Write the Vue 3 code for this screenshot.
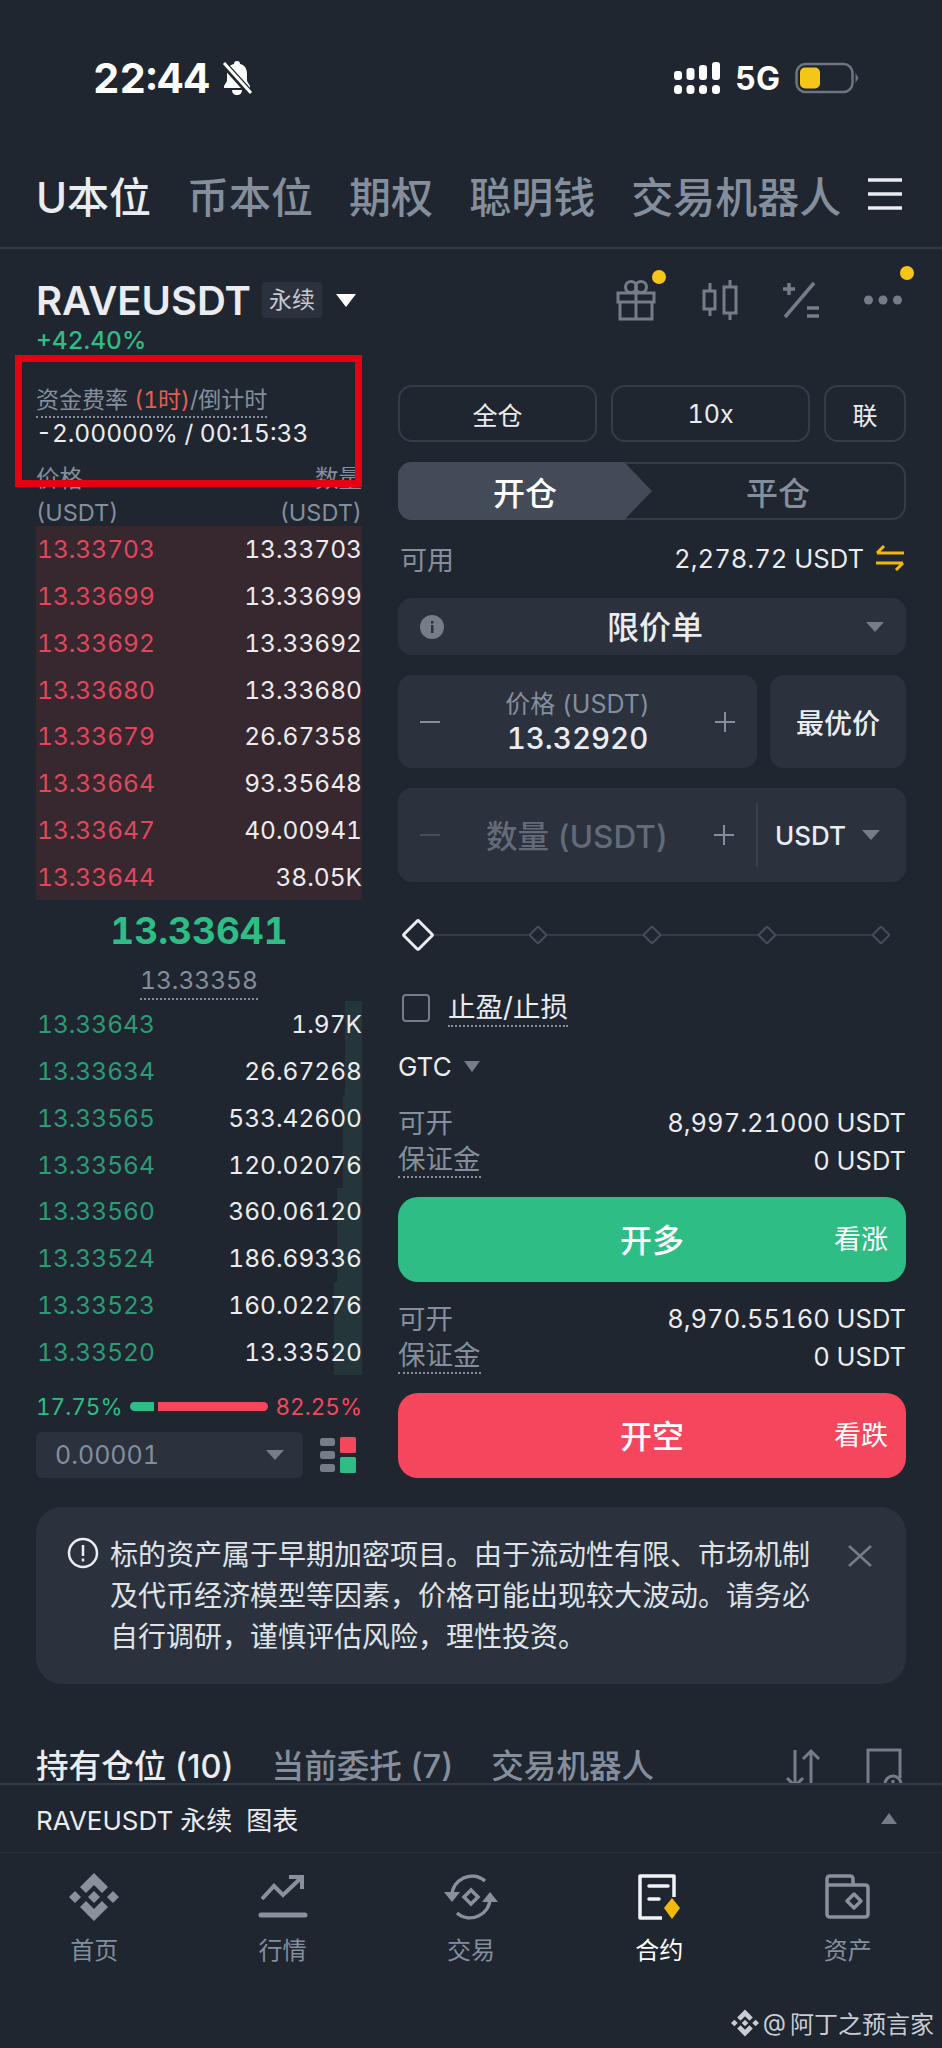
<script setup>
const tabs = ['U本位', '币本位', '期权', '聪明钱', '交易机器人']

const asks = [
  ['13.33703', '13.33703'],
  ['13.33699', '13.33699'],
  ['13.33692', '13.33692'],
  ['13.33680', '13.33680'],
  ['13.33679', '26.67358'],
  ['13.33664', '93.35648'],
  ['13.33647', '40.00941'],
  ['13.33644', '38.05K']
]

const bids = [
  ['13.33643', '1.97K', 17],
  ['13.33634', '26.67268', 17],
  ['13.33565', '533.42600', 19],
  ['13.33564', '120.02076', 19],
  ['13.33560', '360.06120', 25],
  ['13.33524', '186.69336', 25],
  ['13.33523', '160.02276', 28],
  ['13.33520', '13.33520', 28]
]

const navItems = [
  { label: '首页', icon: 'home' },
  { label: '行情', icon: 'market' },
  { label: '交易', icon: 'trade' },
  { label: '合约', icon: 'futures', active: true },
  { label: '资产', icon: 'wallet' }
]
</script>

<template>
  <div class="page">
    <div class="status">
      <div class="status-left">
        <span class="time">22:44</span>
        <svg class="bell" width="36" height="36" viewBox="0 0 34 36">
          <path d="M17 1c2 0 3 1 3 3 5 1 7 5 7 10v7l3 5v2H4v-2l3-5v-7c0-5 2-9 7-10 0-2 1-3 3-3z" fill="#fff" />
          <path d="M12 30h10c0 3-2 5-5 5s-5-2-5-5z" fill="#fff" />
          <path d="M3 3l28 31" stroke="#1f2630" stroke-width="7" />
          <path d="M4 3l27 30" stroke="#fff" stroke-width="3" />
        </svg>
      </div>
      <div class="status-right">
        <svg width="46" height="32" viewBox="0 0 46 32" fill="#fff">
          <rect x="0" y="9" width="8" height="9" rx="3" />
          <rect x="0" y="23" width="8" height="9" rx="3.5" />
          <rect x="12.500" y="6" width="8" height="12" rx="3" />
          <rect x="12.500" y="23" width="8" height="9" rx="3.5" />
          <rect x="25" y="3" width="8" height="15" rx="3" />
          <rect x="25" y="23" width="8" height="9" rx="3.5" />
          <rect x="38" y="0" width="8" height="18" rx="3" />
          <rect x="38" y="23" width="8" height="9" rx="3.5" />
        </svg>
        <span class="net">5G</span>
        <svg width="64" height="32" viewBox="0 0 64 32">
          <rect x="1.500" y="2" width="56" height="28" rx="9" fill="none" stroke="#6e7580" stroke-width="2.500" />
          <rect x="5" y="5.500" width="20" height="21" rx="5" fill="#f5c518" />
          <path d="M60.500 11l3 5-3 5z" fill="#6e7580" />
        </svg>
      </div>
    </div>

    <div class="tabs">
      <span v-for="(t, i) in tabs" :key="t" class="tab" :class="{ on: i === 0 }">{{ t }}</span>
      <svg class="burger" width="34" height="32" viewBox="0 0 34 32">
        <path d="M0 2h34M0 16h34M0 30h34" stroke="#eaecef" stroke-width="3.500" />
      </svg>
    </div>

    <div class="symbol">
      <div class="symbol-left">
        <span class="pair">RAVEUSDT</span>
        <span class="badge">永续</span>
        <i class="caret white"></i>
      </div>
      <div class="symbol-icons">
        <span class="tool">
          <svg width="42" height="42" viewBox="0 0 42 42" fill="none" stroke="#767d89" stroke-width="3">
            <path d="M3 14h36v9H3zM5 23h32v17H5zM21 14v26" />
            <circle cx="16" cy="8" r="5.500" />
            <circle cx="26" cy="8" r="5.500" />
          </svg>
          <i class="dot d1"></i>
        </span>
        <span class="tool">
          <svg width="36" height="40" viewBox="0 0 36 40" fill="none" stroke="#767d89" stroke-width="3">
            <path d="M2 11h11v18H2zM8 3v8M8 29v7M22 7h12v26H22zM28 0v7M28 33v7" />
          </svg>
        </span>
        <span class="tool">
          <svg width="36" height="38" viewBox="0 0 36 38" fill="none" stroke="#767d89" stroke-width="3.500">
            <path d="M31 2L2 36M0 8h12M6 2v12M24 27h12M24 35h12" />
          </svg>
        </span>
        <span class="tool">
          <svg width="38" height="10" viewBox="0 0 38 10" fill="#767d89">
            <circle cx="4.500" cy="5" r="4.500" />
            <circle cx="19" cy="5" r="4.500" />
            <circle cx="33.500" cy="5" r="4.500" />
          </svg>
          <i class="dot d2"></i>
        </span>
      </div>
    </div>
    <div class="change">+42.40%</div>

    <div class="main">
      <div class="red-box"></div>

      <div class="left">
        <div class="funding"><span class="dotted">资金费率 <em>(1时)</em>/倒计时</span></div>
        <div class="funding-val">-2.00000% / 00:15:33</div>
        <div class="book-head"><span>价格</span><span>数量</span></div>
        <div class="book-head second"><span>(USDT)</span><span>(USDT)</span></div>

        <div class="asks">
          <div v-for="a in asks" :key="a[0]" class="row">
            <span class="red">{{ a[0] }}</span><span class="qty">{{ a[1] }}</span>
          </div>
        </div>

        <div class="mid">13.33641</div>
        <div class="index"><span>13.33358</span></div>

        <div class="bids">
          <div v-for="b in bids" :key="b[0]" class="row">
            <i class="depth" :style="{ width: b[2] + 'px' }"></i>
            <span class="green">{{ b[0] }}</span><span class="qty">{{ b[1] }}</span>
          </div>
        </div>

        <div class="ratio">
          <span class="green">17.75%</span>
          <div class="ratio-bar"><i class="g"></i><i class="r"></i></div>
          <span class="red">82.25%</span>
        </div>

        <div class="depth-row">
          <div class="select">
            <span>0.00001</span>
            <i class="caret gray"></i>
          </div>
          <svg width="37" height="36" viewBox="0 0 37 36">
            <rect x="0" y="1" width="15" height="8" rx="2.500" fill="#767d89" />
            <rect x="0" y="14" width="15" height="8" rx="2.500" fill="#767d89" />
            <rect x="0" y="27" width="15" height="8" rx="2.500" fill="#767d89" />
            <rect x="20" y="0" width="16" height="16" rx="1.500" fill="#f6465d" />
            <rect x="20" y="20" width="16" height="16" rx="1.500" fill="#2ebd85" />
          </svg>
        </div>
      </div>

      <div class="right">
        <div class="margin-row">
          <button class="mbtn wide">全仓</button>
          <button class="mbtn wide">10x</button>
          <button class="mbtn">联</button>
        </div>

        <div class="side">
          <div class="side-on">开仓</div>
          <div class="side-off">平仓</div>
        </div>

        <div class="avail">
          <span class="muted">可用</span>
          <span class="avail-val">2,278.72 USDT
            <svg width="30" height="26" viewBox="0 0 30 26" fill="none" stroke="#f0b90b" stroke-width="3">
              <path d="M29 8H2M9 1L2 8M1 18h27M21 25l7-7" />
            </svg>
          </span>
        </div>

        <div class="field order-type">
          <svg width="24" height="24" viewBox="0 0 24 24">
            <circle cx="12" cy="12" r="12" fill="#767d89" />
            <rect x="11" y="10" width="2.500" height="8" fill="#2b323e" />
            <rect x="11" y="6" width="2.500" height="2.500" fill="#2b323e" />
          </svg>
          <span>限价单</span>
          <i class="caret gray"></i>
        </div>

        <div class="price-row">
          <div class="field stepper">
            <i class="minus"></i>
            <div class="price">
              <small>价格 (USDT)</small>
              <b>13.32920</b>
            </div>
            <i class="plus"></i>
          </div>
          <div class="field best">最优价</div>
        </div>

        <div class="field qty-field">
          <div class="qty-left">
            <i class="minus dim"></i>
            <span>数量 (USDT)</span>
            <i class="plus"></i>
          </div>
          <div class="unit">
            <span>USDT</span>
            <i class="caret gray"></i>
          </div>
        </div>

        <div class="slider">
          <i class="knob big"></i>
          <i class="knob"></i>
          <i class="knob"></i>
          <i class="knob"></i>
          <i class="knob"></i>
        </div>

        <div class="tpsl">
          <i class="check"></i>
          <span>止盈/止损</span>
        </div>

        <div class="gtc">
          <span>GTC</span>
          <i class="caret gray"></i>
        </div>

        <div class="info">
          <div><span class="muted">可开</span><span>8,997.21000 USDT</span></div>
          <div><span class="muted dotted">保证金</span><span>0 USDT</span></div>
        </div>
        <button class="action long"><span>开多</span><small>看涨</small></button>

        <div class="info">
          <div><span class="muted">可开</span><span>8,970.55160 USDT</span></div>
          <div><span class="muted dotted">保证金</span><span>0 USDT</span></div>
        </div>
        <button class="action short"><span>开空</span><small>看跌</small></button>
      </div>
    </div>

    <div class="notice">
      <svg width="32" height="32" viewBox="0 0 32 32" fill="none" stroke="#eaecef" stroke-width="2.500">
        <circle cx="16" cy="16" r="14" />
        <path d="M16 8v11M16 21.500v3" />
      </svg>
      <p>标的资产属于早期加密项目。由于流动性有限、市场机制及代币经济模型等因素，价格可能出现较大波动。请务必自行调研，谨慎评估风险，理性投资。</p>
      <svg class="close" width="24" height="22" viewBox="0 0 24 22" stroke="#767d89" stroke-width="2.500">
        <path d="M1 1l22 20M23 1L1 21" />
      </svg>
    </div>

    <div class="orders">
      <span class="otab on">持有仓位 (10)</span>
      <span class="otab">当前委托 (7)</span>
      <span class="otab">交易机器人</span>
      <div class="orders-icons">
        <svg width="36" height="44" viewBox="0 0 36 44" fill="none" stroke="#767d89" stroke-width="3">
          <path d="M10 2v36M2 30l8 8 8-8M26 44V3M18 11l8-8 8 8" />
        </svg>
        <svg width="37" height="44" viewBox="0 0 37 44" fill="none" stroke="#767d89" stroke-width="3">
          <path d="M2 44V2h32v28" />
          <circle cx="27" cy="36" r="8" />
          <path d="M27 32v5l2 2" />
        </svg>
      </div>
    </div>

    <div class="chart-bar">
      <span>RAVEUSDT 永续&nbsp;&nbsp;图表</span>
      <i class="caret up"></i>
    </div>

    <div class="nav">
      <div v-for="n in navItems" :key="n.label" class="nav-item" :class="{ on: n.active }">
        <svg width="50" height="50" viewBox="0 0 50 50">
          <g v-if="n.icon === 'home'" fill="#8a919d">
            <path d="M25 1l14 14-6 6-8-8-8 8-6-6z" />
            <path d="M25 49l14-14-6-6-8 8-8-8-6 6z" />
            <path d="M25 19l6 6-6 6-6-6z" />
            <path d="M6 19l6 6-6 6-6-6zM44 19l6 6-6 6-6-6z" />
          </g>
          <g v-else-if="n.icon === 'market'" fill="none" stroke="#8a919d" stroke-width="4">
            <path d="M4 27l12-13 9 9 19-18M31 5h13v12" />
            <path d="M3 43h44" stroke-width="5" stroke-linecap="round" />
          </g>
          <g v-else-if="n.icon === 'trade'" fill="none" stroke="#8a919d" stroke-width="3.500">
            <path d="M6 24C6 7 26 -2 39 9M44 26c0 17-20 26-33 15" />
            <path d="M-2 20l8 10 8-10zM36 30l8-10 8 10z" fill="#8a919d" stroke="none" />
            <path d="M25 18l7 7-7 7-7-7z" />
          </g>
          <g v-else-if="n.icon === 'futures'">
            <path d="M40 25V4H6v42h22" fill="none" stroke="#f2f3f5" stroke-width="3.500" stroke-linejoin="round" />
            <path d="M15 14h19M15 27h10" stroke="#f2f3f5" stroke-width="3.500" stroke-linecap="round" />
            <path d="M38 26l8 10-8 11-8-11z" fill="#f0b90b" />
          </g>
          <g v-else fill="none" stroke="#8a919d" stroke-width="3.500" stroke-linejoin="round">
            <path d="M4 13V7c0-2 1-3 3-3h20c2 0 3 1 3 3v6h12c2 0 3 1 3 3v26c0 2-1 3-3 3H7c-2 0-3-1-3-3V13h26" />
            <path d="M31 22l7 7-7 7-7-7z" />
          </g>
        </svg>
        <span>{{ n.label }}</span>
      </div>
    </div>

    <div class="watermark">
      <svg width="28" height="28" viewBox="0 0 50 50" fill="#c9ccd2">
        <path d="M25 1l14 14-6 6-8-8-8 8-6-6z" />
        <path d="M25 49l14-14-6-6-8 8-8-8-6 6z" />
        <path d="M25 19l6 6-6 6-6-6z" />
        <path d="M6 19l6 6-6 6-6-6zM44 19l6 6-6 6-6-6z" />
      </svg>
      <span>@</span>
      <span>阿丁之预言家</span>
    </div>
  </div>
</template>

<style>
html, body {
  margin: 0;
  background: #1f2630;
}
</style>

<style scoped>
.page {
  position: relative;
  width: 942px;
  height: 2048px;
  overflow: hidden;
  background: #1f2630;
  color: #eaecef;
  font-family: Inter, "Noto Sans CJK SC", sans-serif;
  font-variant-numeric: tabular-nums;
}

i {
  display: block;
  font-style: normal;
}

button {
  font-family: inherit;
  font-variant-numeric: inherit;
  padding: 0;
  cursor: pointer;
}

.status {
  height: 156px;
  box-sizing: border-box;
  padding: 0 83px 0 93px;
  display: flex;
  align-items: center;
  justify-content: space-between;
}

.status-left {
  display: flex;
  align-items: center;
  gap: 9px;
}

.time {
  font-size: 41px;
  font-weight: 700;
  color: #fff;
}

.status-right {
  display: flex;
  align-items: center;
  gap: 15px;
}

.net {
  font-size: 32px;
  font-weight: 700;
  color: #fff;
}

.tabs {
  height: 93px;
  box-sizing: border-box;
  padding: 0 41px 15px 36px;
  display: flex;
  align-items: center;
  gap: 36px;
  border-bottom: 2px solid #333a45;
}

.tab {
  font-size: 42px;
  font-weight: 500;
  color: #848e9c;
  white-space: nowrap;
}

.tab.on {
  color: #eaecef;
}

.burger {
  margin: 0 0 0 -9px;
  flex: none;
}

.symbol {
  height: 72px;
  box-sizing: border-box;
  padding: 30px 40px 0 36px;
  display: flex;
  align-items: center;
  justify-content: space-between;
}

.symbol-left {
  display: flex;
  align-items: center;
}

.pair {
  font-size: 40px;
  font-weight: 600;
}

.badge {
  margin-left: 11px;
  width: 60px;
  height: 36px;
  line-height: 36px;
  text-align: center;
  font-size: 23px;
  color: #c5c9d0;
  background: #2b323e;
  border-radius: 4px;
}

.caret {
  width: 0;
  height: 0;
  border-left: 9px solid transparent;
  border-right: 9px solid transparent;
  border-top: 10px solid #767d89;
}

.caret.white {
  margin-left: 14px;
  border-top: 13px solid #fff;
  border-left-width: 10px;
  border-right-width: 10px;
}

.caret.up {
  border-left-width: 8px;
  border-right-width: 8px;
  border-top: 0;
  border-bottom: 11px solid #767d89;
}

.symbol-icons {
  display: flex;
  align-items: center;
  gap: 45px;
}

.tool {
  position: relative;
  display: flex;
}

.dot {
  position: absolute;
  width: 14px;
  height: 14px;
  border-radius: 50%;
  background: #f5c518;
}

.d1 {
  right: -9px;
  top: -9px;
}

.d2 {
  right: -12px;
  top: -29px;
}

.change {
  padding-left: 36px;
  height: 36px;
  line-height: 38px;
  font-size: 24.500px;
  font-weight: 500;
  color: #2ebd85;
}

.main {
  position: relative;
  padding: 0 36px;
  display: grid;
  grid-template-columns: 326px 508px;
  column-gap: 36px;
}

.red-box {
  position: absolute;
  left: 15px;
  top: -2px;
  width: 347px;
  height: 132px;
  box-sizing: border-box;
  border: 7px solid #e60012;
  z-index: 2;
}

.funding {
  margin-top: 28px;
  height: 33px;
  font-size: 23px;
  line-height: 30px;
  color: #848e9c;
  white-space: nowrap;
}

.dotted {
  border-bottom: 2px dotted #848e9c;
  padding-bottom: 2px;
}

.funding em {
  font-style: normal;
  color: #e0604f;
}

.funding-val {
  height: 30px;
  line-height: 30px;
  font-size: 24.500px;
  white-space: nowrap;
}

.book-head {
  margin-top: 16px;
  display: flex;
  justify-content: space-between;
  font-size: 23.500px;
  line-height: 30px;
  color: #848e9c;
}

.book-head.second {
  margin-top: 4px;
  height: 28px;
}

.asks {
  background: #37272f;
}

.row {
  position: relative;
  height: 46.750px;
  display: flex;
  align-items: center;
  justify-content: space-between;
  font-size: 24.500px;
  padding-left: 1px;
}

.row span {
  position: relative;
}

.depth {
  position: absolute;
  right: 0;
  top: 0;
  bottom: 0;
  background: #24363a;
}

.red {
  color: #f6465d;
}

.green {
  color: #2ebd85;
}

.bids .green {
  color: #2a9c76;
}

.asks .red {
  color: #e0465c;
}

.qty {
  color: #eaecef;
}

.mid {
  height: 62px;
  line-height: 62px;
  text-align: center;
  font-size: 37px;
  font-weight: 700;
  color: #2ebd85;
}

.index {
  height: 39px;
  line-height: 36px;
  text-align: center;
  font-size: 24.500px;
  color: #848e9c;
}

.index span {
  border-bottom: 2px dotted #848e9c;
  padding-bottom: 3px;
}

.ratio {
  margin-top: 15px;
  height: 32px;
  display: flex;
  align-items: center;
  justify-content: space-between;
  font-size: 22.500px;
}

.ratio-bar {
  width: 138px;
  display: flex;
  gap: 4px;
}

.ratio-bar i {
  height: 9px;
}

.ratio-bar .g {
  width: 24px;
  background: #2ebd85;
  border-radius: 5px 0 0 5px;
}

.ratio-bar .r {
  flex: 1;
  background: #f6465d;
  border-radius: 0 5px 5px 0;
}

.depth-row {
  margin-top: 10px;
  display: flex;
  align-items: center;
  justify-content: space-between;
  padding-right: 5px;
}

.select {
  width: 267px;
  height: 46px;
  box-sizing: border-box;
  padding: 0 19px;
  display: flex;
  align-items: center;
  justify-content: space-between;
  background: #2b323e;
  border-radius: 6px;
  font-size: 25px;
  color: #848e9c;
}

.margin-row {
  margin-top: 28px;
  display: flex;
  gap: 14px;
}

.mbtn {
  height: 57px;
  width: 82px;
  background: none;
  border: 2px solid #353c48;
  border-radius: 14px;
  color: #eaecef;
  font-size: 25px;
}

.mbtn.wide {
  width: 199px;
}

.side {
  margin-top: 20px;
  height: 58px;
  box-sizing: border-box;
  display: flex;
  border: 2px solid #353c48;
  border-radius: 14px;
  position: relative;
  font-size: 32px;
  font-weight: 500;
}

.side-on {
  width: 254px;
  margin: -2px 0 -2px -2px;
  background: #434b59;
  border-radius: 14px 0 0 14px;
  clip-path: polygon(0 0, 89% 0, 100% 50%, 89% 100%, 0 100%);
  display: flex;
  align-items: center;
  justify-content: center;
  color: #fff;
}

.side-off {
  flex: 1;
  display: flex;
  align-items: center;
  justify-content: center;
  color: #848e9c;
}

.avail {
  margin: 14px 0 16px;
  height: 48px;
  display: flex;
  align-items: center;
  justify-content: space-between;
  font-size: 25.600px;
  padding-left: 2px;
}

.avail .muted {
  font-size: 27px;
}

.muted {
  color: #848e9c;
}

.avail-val {
  display: flex;
  align-items: center;
  gap: 11px;
  padding-right: 1px;
}

.field {
  background: #2b323e;
  border-radius: 14px;
}

.order-type {
  height: 57px;
  box-sizing: border-box;
  padding: 0 22px;
  display: flex;
  align-items: center;
  justify-content: space-between;
  font-size: 32px;
  font-weight: 500;
}

.order-type span {
  padding-bottom: 3px;
}

.price-row {
  margin-top: 20px;
  display: flex;
  gap: 13px;
}

.stepper {
  width: 359px;
  height: 93px;
  box-sizing: border-box;
  padding: 0 22px;
  display: flex;
  align-items: center;
  justify-content: space-between;
}

.minus,
.plus {
  position: relative;
  width: 20px;
  height: 20px;
}

.minus::before,
.plus::before {
  content: "";
  position: absolute;
  left: 0;
  right: 0;
  top: 9px;
  height: 2px;
  background: #848e9c;
}

.plus::after {
  content: "";
  position: absolute;
  top: 0;
  bottom: 0;
  left: 9px;
  width: 2px;
  background: #848e9c;
}

.minus.dim::before {
  background: #474e5a;
}

.price {
  display: flex;
  flex-direction: column;
  align-items: center;
}

.price small {
  font-size: 25px;
  line-height: 32px;
  color: #848e9c;
}

.price b {
  font-size: 29.500px;
  line-height: 36px;
  font-weight: 500;
}

.best {
  flex: 1;
  display: flex;
  align-items: center;
  justify-content: center;
  font-size: 28px;
  font-weight: 500;
}

.qty-field {
  margin-top: 20px;
  height: 94px;
  display: flex;
  align-items: center;
}

.qty-left {
  width: 360px;
  height: 64px;
  box-sizing: border-box;
  padding: 0 22px;
  display: flex;
  align-items: center;
  justify-content: space-between;
  border-right: 2px solid #3a414d;
}

.qty-left span {
  font-size: 31.500px;
  font-weight: 500;
  color: #636b78;
  padding-bottom: 3px;
}

.unit {
  flex: 1;
  padding: 0 26px 0 17px;
  display: flex;
  align-items: center;
  justify-content: space-between;
  font-size: 26px;
  font-weight: 500;
}

.slider {
  position: relative;
  margin-top: 38px;
  height: 30px;
  padding: 0 18px 0 8px;
  display: flex;
  align-items: center;
  justify-content: space-between;
}

.slider::before {
  content: "";
  position: absolute;
  left: 20px;
  right: 22px;
  top: 14px;
  height: 2px;
  background: #353c48;
}

.knob {
  position: relative;
  width: 14px;
  height: 14px;
  transform: rotate(45deg);
  box-sizing: border-box;
  border: 2px solid #474e5a;
  background: #1f2630;
  border-radius: 2px;
}

.knob.big {
  width: 24px;
  height: 24px;
  border: 3px solid #eaecef;
  border-radius: 3px;
}

.tpsl {
  margin-top: 38px;
  height: 40px;
  padding-left: 4px;
  display: flex;
  align-items: center;
  gap: 18px;
  font-size: 27.500px;
}

.tpsl span {
  border-bottom: 2px dotted #848e9c;
  line-height: 34px;
  padding-bottom: 1px;
}

.check {
  width: 28px;
  height: 28px;
  box-sizing: border-box;
  border: 2px solid #767d89;
  border-radius: 4px;
}

.gtc {
  margin-top: 18px;
  height: 40px;
  display: flex;
  align-items: center;
  gap: 12px;
  font-size: 26px;
}

.gtc .caret {
  border-left-width: 8px;
  border-right-width: 8px;
  border-top-width: 11px;
}

.info {
  margin-top: 18px;
  font-size: 25.500px;
}

.info div {
  height: 37.500px;
  display: flex;
  align-items: center;
  justify-content: space-between;
}

.info .muted {
  font-size: 27.500px;
  line-height: 34px;
}

.info span.dotted {
  padding-bottom: 0;
}

.action {
  position: relative;
  margin-top: 18px;
  width: 100%;
  height: 85px;
  padding-bottom: 4px;
  border: 0;
  border-radius: 20px;
  display: flex;
  align-items: center;
  justify-content: center;
  color: #fff;
  font-size: 32px;
  font-weight: 500;
}

.action small {
  position: absolute;
  right: 18px;
  font-size: 27px;
  font-weight: 400;
}

.long {
  background: #2ebd85;
}

.short {
  background: #f6465d;
}

.notice {
  margin: 29px 36px 0;
  height: 177px;
  box-sizing: border-box;
  padding: 30px 34px 0 31px;
  display: flex;
  align-items: flex-start;
  background: #2b323e;
  border-radius: 26px;
}

.notice p {
  margin: -2px 0 0 11px;
  width: 704px;
  font-size: 28px;
  line-height: 41px;
  color: #dfe2e6;
}

.close {
  margin: 8px 0 0 auto;
}

.orders {
  height: 99px;
  box-sizing: border-box;
  padding: 66px 36px 0;
  display: flex;
  gap: 38px;
}

.otab {
  font-size: 32.600px;
  line-height: 33px;
  font-weight: 500;
  color: #848e9c;
  white-space: nowrap;
  font-variant-numeric: normal;
}

.otab.on {
  color: #eaecef;
}

.orders-icons {
  margin-left: auto;
  margin-top: -2px;
  height: 35px;
  overflow: hidden;
  display: flex;
  gap: 45px;
  padding-right: 3px;
}

.chart-bar {
  position: relative;
  height: 70px;
  box-sizing: border-box;
  padding: 0 45px 0 36px;
  display: flex;
  align-items: center;
  justify-content: space-between;
  background: #1f2630;
  border-top: 2px solid #333a45;
  border-bottom: 1px solid #2b323e;
  font-size: 26px;
}

.nav {
  display: grid;
  grid-template-columns: repeat(5, 188.400px);
  padding-top: 19px;
}

.nav-item {
  display: flex;
  flex-direction: column;
  align-items: center;
  gap: 13px;
  font-size: 24px;
  line-height: 32px;
  color: #848e9c;
}

.nav-item svg {
  overflow: visible;
}

.nav-item.on {
  color: #fff;
}

.watermark {
  position: absolute;
  right: 8px;
  bottom: 8px;
  display: flex;
  align-items: center;
  gap: 4px;
  font-size: 24px;
  color: #c9ccd2;
}
</style>
